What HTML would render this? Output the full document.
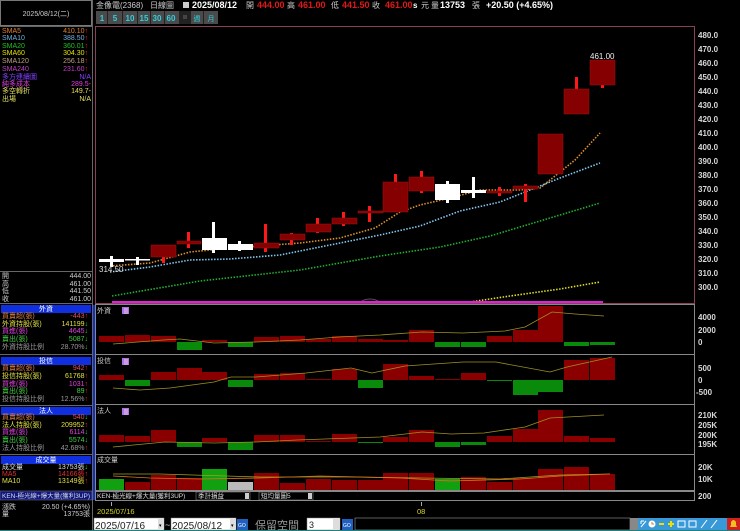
<!DOCTYPE html>
<html><head><meta charset="utf-8"><style>
html,body{margin:0;padding:0;background:#000;width:740px;height:531px;overflow:hidden}
svg{display:block}
text{font-family:"Liberation Sans","Noto Sans CJK TC",sans-serif}
.s{font-size:7px}
.ax{font-size:8px;fill:#d8d8d8;font-weight:bold}
</style></head><body>
<svg width="740" height="531" viewBox="0 0 740 531" xmlns="http://www.w3.org/2000/svg">
<rect width="740" height="531" fill="#000"/>
<!-- LEFT PANEL -->
<rect x="0.5" y="0.5" width="91" height="25" fill="#000" stroke="#777"/>
<text x="46" y="16" class="s" fill="#ccc" text-anchor="middle">2025/08/12(二)</text>
<line x1="0" y1="26.5" x2="92" y2="26.5" stroke="#666"/>
<line x1="92.5" y1="0" x2="92.5" y2="531" stroke="#666"/>
<g class="s" text-anchor="start">
<text x="2" y="33" fill="#e08030">SMA5</text><text x="2" y="40" fill="#70b0e0">SMA10</text><text x="2" y="48" fill="#20c020">SMA20</text><text x="2" y="55" fill="#e0e000">SMA60</text><text x="2" y="63" fill="#c0a080">SMA120</text><text x="2" y="71" fill="#c040c0">SMA240</text><text x="2" y="79" fill="#8040ff">多方連續圖</text><text x="2" y="86" fill="#e040e0">純多成本</text><text x="2" y="93" fill="#e0e060">多空轉折</text><text x="2" y="101" fill="#e0e060">出場</text>
</g>
<g class="s" text-anchor="end">
<text x="88" y="33" fill="#e08030">410.10<tspan fill="#f22">↑</tspan></text><text x="88" y="40" fill="#70b0e0">388.50<tspan fill="#f22">↑</tspan></text><text x="88" y="48" fill="#20c020">360.01<tspan fill="#f22">↑</tspan></text><text x="88" y="55" fill="#e0e000">304.30<tspan fill="#f22">↑</tspan></text><text x="88" y="63" fill="#c0a080">256.18<tspan fill="#f22">↑</tspan></text><text x="88" y="71" fill="#c040c0">231.60<tspan fill="#f22">↑</tspan></text><text x="91" y="79" fill="#8040ff">N/A</text><text x="91" y="86" fill="#e040e0">289.5-</text><text x="91" y="93" fill="#e0e060">149.7-</text><text x="91" y="101" fill="#e0e060">N/A</text>
</g>
<line x1="0" y1="271.5" x2="92" y2="271.5" stroke="#666"/>
<g class="s" fill="#ccc"><text x="2" y="278">開</text><text x="2" y="286">高</text><text x="2" y="293">低</text><text x="2" y="301">收</text></g>
<g class="s" fill="#ccc" text-anchor="end"><text x="91" y="278">444.00</text><text x="91" y="286">461.00</text><text x="91" y="293">441.50</text><text x="91" y="301">461.00</text></g>
<line x1="0" y1="303.5" x2="92" y2="303.5" stroke="#666"/>
<!-- 外資 -->
<rect x="1" y="305" width="90" height="8" fill="#1030e0"/><text x="46" y="311" class="s" fill="#fff" text-anchor="middle">外資</text>
<g class="s"><text x="2" y="318" fill="#e08040">買賣超(張)</text><text x="2" y="326" fill="#e0e040">外資持股(張)</text><text x="2" y="333" fill="#e040e0">買進(張)</text><text x="2" y="341" fill="#40d040">賣出(張)</text><text x="2" y="349" fill="#999">外資持股比例</text></g>
<g class="s" text-anchor="end"><text x="88" y="318" fill="#e05050">-443<tspan fill="#f22">↑</tspan></text><text x="88" y="326" fill="#e0e040">141199<tspan fill="#2d2">↓</tspan></text><text x="88" y="333" fill="#e040e0">4645<tspan fill="#2d2">↓</tspan></text><text x="88" y="341" fill="#40d040">5087<tspan fill="#2d2">↓</tspan></text><text x="88" y="349" fill="#999">28.70%<tspan fill="#2d2">↓</tspan></text></g>
<line x1="0" y1="354.5" x2="92" y2="354.5" stroke="#666"/>
<!-- 投信 -->
<rect x="1" y="357" width="90" height="8" fill="#1030e0"/><text x="46" y="363" class="s" fill="#fff" text-anchor="middle">投信</text>
<g class="s"><text x="2" y="370" fill="#e08040">買賣超(張)</text><text x="2" y="378" fill="#e0e040">投信持股(張)</text><text x="2" y="386" fill="#e040e0">買進(張)</text><text x="2" y="393" fill="#40d040">賣出(張)</text><text x="2" y="401" fill="#999">投信持股比例</text></g>
<g class="s" text-anchor="end"><text x="88" y="370" fill="#e05050">942<tspan fill="#f22">↑</tspan></text><text x="88" y="378" fill="#e0e040">61768<tspan fill="#f22">↑</tspan></text><text x="88" y="386" fill="#e040e0">1031<tspan fill="#f22">↑</tspan></text><text x="88" y="393" fill="#40d040">89<tspan fill="#f22">↑</tspan></text><text x="88" y="401" fill="#999">12.56%<tspan fill="#f22">↑</tspan></text></g>
<line x1="0" y1="405.5" x2="92" y2="405.5" stroke="#666"/>
<!-- 法人 -->
<rect x="1" y="407" width="90" height="8" fill="#1030e0"/><text x="46" y="413" class="s" fill="#fff" text-anchor="middle">法人</text>
<g class="s"><text x="2" y="419" fill="#e08040">買賣超(張)</text><text x="2" y="427" fill="#e0e040">法人持股(張)</text><text x="2" y="434" fill="#e040e0">買進(張)</text><text x="2" y="442" fill="#40d040">賣出(張)</text><text x="2" y="450" fill="#999">法人持股比例</text></g>
<g class="s" text-anchor="end"><text x="88" y="419" fill="#e05050">540<tspan fill="#2d2">↓</tspan></text><text x="88" y="427" fill="#e0e040">209952<tspan fill="#f22">↑</tspan></text><text x="88" y="434" fill="#e040e0">6114<tspan fill="#2d2">↓</tspan></text><text x="88" y="442" fill="#40d040">5574<tspan fill="#2d2">↓</tspan></text><text x="88" y="450" fill="#999">42.68%<tspan fill="#f22">↑</tspan></text></g>
<line x1="0" y1="454.5" x2="92" y2="454.5" stroke="#666"/>
<!-- 成交量 -->
<rect x="1" y="456" width="90" height="8" fill="#1030e0"/><text x="46" y="462" class="s" fill="#fff" text-anchor="middle">成交量</text>
<g class="s"><text x="2" y="469" fill="#ddd">成交量</text><text x="2" y="476" fill="#e03030">MA5</text><text x="2" y="483" fill="#e0e040">MA10</text></g>
<g class="s" text-anchor="end"><text x="88" y="469" fill="#ddd">13753張<tspan fill="#2d2">↓</tspan></text><text x="88" y="476" fill="#e03030">14166張<tspan fill="#f22">↑</tspan></text><text x="88" y="483" fill="#e0e040">13149張<tspan fill="#f22">↑</tspan></text></g>
<rect x="0" y="491" width="92" height="9" fill="#101880" stroke="#777" stroke-width="0.5"/>
<text x="2" y="498" font-size="6" fill="#ddd" textLength="88" lengthAdjust="spacingAndGlyphs">KEN-極光線+爆大量(獲利3UP)</text>
<g class="s" fill="#ccc"><text x="2" y="509">漲跌</text><text x="2" y="516">量</text></g>
<g class="s" fill="#ccc" text-anchor="end"><text x="90" y="509">20.50 (+4.65%)</text><text x="90" y="516">13753張</text></g>
<rect x="93" y="305" width="2" height="195" fill="#1030c0"/>

<!-- HEADER -->
<g font-size="8">
<text x="96" y="8" fill="#ccc">金像電(2368)</text>
<text x="150" y="8" fill="#ccc">日線圖</text>
<rect x="183" y="2" width="6" height="6" fill="#ccc"/>
<text x="192" y="8" fill="#fff" font-weight="bold" font-size="9">2025/08/12</text>
<text x="246" y="8" fill="#ccc">開</text><text x="257" y="8" fill="#e01818" font-weight="bold" font-size="9">444.00</text>
<text x="287" y="8" fill="#ccc">高</text><text x="298" y="8" fill="#e01818" font-weight="bold" font-size="9">461.00</text>
<text x="331" y="8" fill="#ccc">低</text><text x="342" y="8" fill="#e01818" font-weight="bold" font-size="9">441.50</text>
<text x="372" y="8" fill="#ccc">收</text><text x="385" y="8" fill="#e01818" font-weight="bold" font-size="9">461.00</text>
<text x="413" y="8" fill="#fff" font-weight="bold">s</text><text x="421" y="8" fill="#ccc">元</text>
<text x="431" y="8" fill="#ccc">量</text><text x="440" y="8" fill="#fff" font-weight="bold" font-size="9">13753</text><text x="472" y="8" fill="#ccc">張</text>
<text x="486" y="8" fill="#fff" font-weight="bold" font-size="9">+20.50 (+4.65%)</text>
</g>
<g font-size="8" font-weight="bold" fill="#30d0e0" text-anchor="middle">
<rect x="96" y="11" width="122" height="13" fill="#4a4a4a"/>
<rect x="179" y="11" width="12" height="13" fill="#222"/>
<g stroke="#222" stroke-width="1"><line x1="107.5" y1="11" x2="107.5" y2="24"/><line x1="122.5" y1="11" x2="122.5" y2="24"/><line x1="137.5" y1="11" x2="137.5" y2="24"/><line x1="150.5" y1="11" x2="150.5" y2="24"/><line x1="164.5" y1="11" x2="164.5" y2="24"/><line x1="203.5" y1="11" x2="203.5" y2="24"/></g>
<text x="102" y="21">1</text><text x="115" y="21">5</text><text x="130" y="21">10</text><text x="144" y="21">15</text><text x="157" y="21">30</text><text x="171" y="21">60</text>
<rect x="183" y="15" width="4" height="4" fill="#444"/>
<text x="197" y="21" font-weight="normal" font-size="7">週</text><text x="211" y="21" font-weight="normal" font-size="7">月</text>
</g>

<!-- MAIN CHART -->
<rect x="95.5" y="26.5" width="599" height="277" fill="none" stroke="#8a4058"/>
<g class="ax">
<text x="698" y="38">480.0</text><text x="698" y="52">470.0</text><text x="698" y="66">460.0</text><text x="698" y="80">450.0</text><text x="698" y="94">440.0</text><text x="698" y="108">430.0</text><text x="698" y="122">420.0</text><text x="698" y="136">410.0</text><text x="698" y="150">400.0</text><text x="698" y="164">390.0</text><text x="698" y="178">380.0</text><text x="698" y="192">370.0</text><text x="698" y="206">360.0</text><text x="698" y="220">350.0</text><text x="698" y="234">340.0</text><text x="698" y="248">330.0</text><text x="698" y="262">320.0</text><text x="698" y="276">310.0</text><text x="698" y="290">300.0</text>
</g>
<g fill="none" stroke-width="1.6" stroke-dasharray="1.5 1.5">
<polyline stroke="#e09030" points="110,266 150,263 190,252 230,248 260,246 300,243 340,238 375,228 400,212 420,205 450,198 480,190 520,190 540,188 555,176 575,160 600,133"/>
<polyline stroke="#80c8f0" points="110,272 150,267 190,260 230,259 280,255 330,245 380,235 420,226 460,211 500,202 530,190 560,178 600,163"/>
<polyline stroke="#20b030" points="112,296 200,281 300,270 380,256 440,247 490,236 540,221 600,203"/>
<polyline stroke="#e0e020" points="470,302 510,296 560,289 600,282"/>
</g>
<path d="M360,302 Q370,296 380,302" stroke="#555" fill="none"/>
<rect x="112" y="301" width="491" height="2" fill="#e020e0"/>
<g fill="#ff1818">
<rect x="162" y="257" width="3" height="6"/><rect x="187" y="232" width="3" height="16"/><rect x="264" y="224" width="3" height="28"/><rect x="290" y="233" width="3" height="12"/><rect x="316" y="218" width="3" height="15"/><rect x="342" y="212" width="3" height="14"/><rect x="368" y="206" width="3" height="16"/><rect x="394" y="174" width="3" height="8"/><rect x="420" y="171" width="3" height="22"/><rect x="498" y="187" width="3" height="9"/><rect x="524" y="184" width="3" height="18"/><rect x="575" y="77" width="3" height="12"/><rect x="601" y="85" width="3" height="3"/>
</g>
<g fill="#850000" stroke="#a01010" stroke-width="0.5">
<rect x="151" y="245" width="25" height="12"/><rect x="177" y="241" width="24" height="3"/><rect x="254" y="243" width="25" height="5"/><rect x="280" y="234" width="25" height="6"/><rect x="306" y="224" width="25" height="8"/><rect x="332" y="218" width="25" height="6"/><rect x="358" y="211" width="25" height="2"/><rect x="383" y="182" width="25" height="30"/><rect x="409" y="177" width="25" height="14"/><rect x="487" y="191" width="25" height="2"/><rect x="513" y="186" width="25" height="3"/><rect x="538" y="134" width="25" height="40"/><rect x="564" y="89" width="25" height="25"/><rect x="590" y="60" width="25" height="25"/>
</g>
<g fill="#fff">
<rect x="99" y="259" width="25" height="3"/><rect x="110" y="256" width="3" height="11"/>
<rect x="125" y="259" width="25" height="1.5"/><rect x="136" y="257" width="3" height="8"/>
<rect x="202" y="238" width="25" height="12"/><rect x="212" y="222" width="3" height="31"/>
<rect x="228" y="244" width="25" height="6"/><rect x="238" y="241" width="3" height="10"/>
<rect x="435" y="184" width="25" height="16"/><rect x="446" y="181" width="3" height="22"/>
<rect x="461" y="190" width="25" height="3"/><rect x="472" y="177" width="3" height="21"/>
</g>
<text x="590" y="59" font-size="8" fill="#eee">461.00</text>
<text x="99" y="272" font-size="8" fill="#ddd">314.50</text>

<!-- SUB PANEL 1 -->
<rect x="95.5" y="304.5" width="599" height="50" fill="none" stroke="#888"/>
<text x="97" y="313" class="s" fill="#ccc">外資</text>
<rect x="122" y="307" width="7" height="7" fill="#b070e0"/><g stroke="#fff" stroke-width="0.6"><line x1="124" y1="309" x2="128" y2="309"/><line x1="124" y1="311" x2="128" y2="311"/><line x1="124" y1="313" x2="128" y2="313"/></g>
<g class="ax"><text x="698" y="320">4000</text><text x="698" y="333">2000</text><text x="698" y="345">0</text></g>
<g fill="#8a0000">
<rect x="99" y="336" width="25" height="6"/><rect x="125" y="335" width="25" height="7"/><rect x="151" y="336" width="25" height="6"/><rect x="202" y="340" width="25" height="2"/><rect x="254" y="337" width="25" height="5"/><rect x="280" y="336" width="25" height="6"/><rect x="306" y="339" width="25" height="3"/><rect x="332" y="336" width="25" height="6"/><rect x="358" y="339" width="25" height="3"/><rect x="383" y="340" width="25" height="2"/><rect x="409" y="330" width="25" height="12"/><rect x="487" y="336" width="25" height="6"/><rect x="513" y="330" width="25" height="12"/><rect x="538" y="306" width="25" height="36"/>
</g>
<g fill="#0a8a0a">
<rect x="177" y="342" width="25" height="8"/><rect x="228" y="342" width="25" height="5"/><rect x="435" y="342" width="25" height="5"/><rect x="461" y="342" width="25" height="5"/><rect x="564" y="342" width="25" height="4"/><rect x="590" y="342" width="25" height="3"/>
</g>
<polyline fill="none" stroke="#a09020" stroke-width="0.8" points="113,344 163,340 180,339 214,343 256,342 300,340 339,337 380,335 422,332 463,333 505,331 525,327 552,312 575,314 604,316"/>

<!-- SUB PANEL 2 -->
<rect x="95.5" y="354.5" width="599" height="50" fill="none" stroke="#888"/>
<text x="97" y="363" class="s" fill="#ccc">投信</text>
<rect x="122" y="358" width="7" height="7" fill="#b070e0"/><g stroke="#fff" stroke-width="0.6"><line x1="124" y1="360" x2="128" y2="360"/><line x1="124" y1="362" x2="128" y2="362"/><line x1="124" y1="364" x2="128" y2="364"/></g>
<g class="ax"><text x="698" y="371">500</text><text x="698" y="383">0</text><text x="696" y="395">-500</text></g>
<g fill="#8a0000">
<rect x="99" y="375" width="25" height="5"/><rect x="151" y="372" width="25" height="8"/><rect x="177" y="368" width="25" height="12"/><rect x="202" y="372" width="25" height="8"/><rect x="254" y="374" width="25" height="6"/><rect x="280" y="373" width="25" height="7"/><rect x="306" y="379" width="25" height="1"/><rect x="332" y="369" width="25" height="11"/><rect x="383" y="364" width="25" height="16"/><rect x="409" y="376" width="25" height="4"/><rect x="435" y="379" width="25" height="1"/><rect x="461" y="373" width="25" height="7"/><rect x="564" y="360" width="25" height="20"/><rect x="590" y="358" width="25" height="22"/>
</g>
<g fill="#0a8a0a">
<rect x="125" y="380" width="25" height="6"/><rect x="228" y="380" width="25" height="7"/><rect x="358" y="380" width="25" height="8"/><rect x="487" y="380" width="25" height="1"/><rect x="513" y="380" width="25" height="15"/><rect x="538" y="380" width="25" height="12"/>
</g>
<polyline fill="none" stroke="#a09020" stroke-width="0.8" points="113,388 140,390 170,388 214,382 231,377 256,377 306,373 351,368 372,373 405,366 463,362 496,362 550,372 567,367 612,357"/>

<!-- SUB PANEL 3 -->
<rect x="95.5" y="404.5" width="599" height="50" fill="none" stroke="#888"/>
<text x="97" y="413" class="s" fill="#ccc">法人</text>
<rect x="122" y="408" width="7" height="7" fill="#b070e0"/><g stroke="#fff" stroke-width="0.6"><line x1="124" y1="410" x2="128" y2="410"/><line x1="124" y1="412" x2="128" y2="412"/><line x1="124" y1="414" x2="128" y2="414"/></g>
<g class="ax"><text x="698" y="418">210K</text><text x="698" y="428">205K</text><text x="698" y="438">200K</text><text x="698" y="447">195K</text></g>
<g fill="#8a0000">
<rect x="99" y="435" width="25" height="7"/><rect x="125" y="436" width="25" height="6"/><rect x="151" y="430" width="25" height="12"/><rect x="202" y="438" width="25" height="4"/><rect x="254" y="435" width="25" height="7"/><rect x="280" y="435" width="25" height="7"/><rect x="306" y="441" width="25" height="1"/><rect x="332" y="434" width="25" height="8"/><rect x="383" y="437" width="25" height="5"/><rect x="409" y="430" width="25" height="12"/><rect x="487" y="436" width="25" height="6"/><rect x="513" y="429" width="25" height="13"/><rect x="538" y="410" width="25" height="32"/><rect x="564" y="436" width="25" height="6"/><rect x="590" y="438" width="25" height="4"/>
</g>
<g fill="#0a8a0a">
<rect x="177" y="442" width="25" height="5"/><rect x="228" y="442" width="25" height="8"/><rect x="358" y="442" width="25" height="1"/><rect x="435" y="442" width="25" height="5"/><rect x="461" y="442" width="25" height="3"/>
</g>
<polyline fill="none" stroke="#a09020" stroke-width="0.8" points="113,447 165,442 214,443 256,442 297,440 380,437 422,432 451,434 484,433 525,427 550,418 604,415"/>

<!-- VOLUME -->
<rect x="95.5" y="454.5" width="599" height="36" fill="none" stroke="#888"/>
<text x="97" y="462" class="s" fill="#ccc">成交量</text>
<g class="ax"><text x="698" y="470">20K</text><text x="698" y="482">10K</text><text x="698" y="499">200</text></g>
<g fill="#8a0000">
<rect x="125" y="482" width="25" height="8"/><rect x="151" y="475" width="25" height="15"/><rect x="177" y="478" width="25" height="12"/><rect x="254" y="473" width="25" height="17"/><rect x="280" y="483" width="25" height="7"/><rect x="306" y="479" width="25" height="11"/><rect x="332" y="480" width="25" height="10"/><rect x="358" y="480" width="25" height="10"/><rect x="383" y="473" width="25" height="17"/><rect x="409" y="473" width="25" height="17"/><rect x="461" y="477" width="25" height="13"/><rect x="487" y="482" width="25" height="8"/><rect x="513" y="478" width="25" height="12"/><rect x="538" y="469" width="25" height="21"/><rect x="564" y="467" width="25" height="23"/><rect x="590" y="474" width="25" height="16"/>
</g>
<g fill="#10a010"><rect x="99" y="479" width="25" height="11"/><rect x="202" y="469" width="25" height="21"/><rect x="435" y="479" width="25" height="11"/></g>
<rect x="228" y="482" width="25" height="8" fill="#bbb"/>
<polyline fill="none" stroke="#a0a020" stroke-width="0.8" points="113,474 160,474 260,477 350,477 420,478 500,479 560,475 610,474"/>
<polyline fill="none" stroke="#e07020" stroke-width="0.8" points="113,476 150,478 200,479 260,478 320,476 400,478 450,481 520,479 560,476 610,474"/>

<!-- KEN row -->
<rect x="95.5" y="491.5" width="599" height="9" fill="#000" stroke="#888"/>
<text x="97" y="498" font-size="6.5" fill="#ddd">KEN-極光線+爆大量(獲利3UP)</text>
<rect x="196" y="492" width="54" height="8" fill="#000" stroke="#999" stroke-width="0.5"/><text x="198" y="498" font-size="6.5" fill="#ddd">季計損益</text><rect x="245" y="493" width="4" height="6" fill="#ccc"/>
<rect x="259" y="492" width="54" height="8" fill="#000" stroke="#999" stroke-width="0.5"/><text x="261" y="498" font-size="6.5" fill="#ddd">短均量圖5</text><rect x="308" y="493" width="4" height="6" fill="#ccc"/>
<line x1="111.5" y1="502" x2="111.5" y2="506" stroke="#aaa"/><line x1="421.5" y1="502" x2="421.5" y2="506" stroke="#aaa"/>
<text x="97" y="514" font-size="7.5" fill="#d8d820">2025/07/16</text>
<text x="417" y="514" font-size="7.5" fill="#d8d820">08</text>

<!-- BOTTOM TOOLBAR -->
<rect x="93" y="517" width="647" height="14" fill="#000"/>
<rect x="94" y="518" width="70" height="12" fill="#fff" stroke="#888" stroke-width="0.5"/>
<text x="95" y="529" font-size="10" fill="#222">2025/07/16</text>
<rect x="158" y="519" width="6" height="10" fill="#ddd"/><text x="159" y="527" font-size="5" fill="#000">▾</text>
<text x="165" y="528" font-size="9" fill="#ccc">~</text>
<rect x="171" y="518" width="65" height="12" fill="#fff" stroke="#888" stroke-width="0.5"/>
<text x="172" y="529" font-size="10" fill="#222">2025/08/12</text>
<rect x="230" y="519" width="6" height="10" fill="#ddd"/><text x="231" y="527" font-size="5" fill="#000">▾</text>
<rect x="237" y="519" width="11" height="11" fill="#2060c0"/><text x="238" y="527" font-size="5" fill="#fff">GO</text>
<text x="255" y="529" font-size="11" fill="#999">保留空間</text>
<rect x="307" y="518" width="33" height="12" fill="#fff" stroke="#888" stroke-width="0.5"/>
<text x="309" y="528" font-size="9" fill="#222">3</text>
<rect x="333" y="519" width="7" height="10" fill="#ddd"/>
<rect x="342" y="519" width="11" height="11" fill="#2060c0"/><text x="343" y="527" font-size="5" fill="#fff">GO</text>
<rect x="355" y="518" width="275" height="12" fill="#000" stroke="#999" stroke-width="0.6"/>
<rect x="630" y="518" width="8" height="12" fill="#888"/>
<rect x="638" y="518" width="89" height="12" fill="#3898d8"/>
<g stroke="#fff" stroke-width="1" fill="none">
<path d="M641,527 L646,521 M641,521 L644,521 M641,521 L641,524"/>
<circle cx="652" cy="524" r="3.5" fill="#fff" stroke="none"/><path d="M652,522 L652,524 L654,524" stroke="#e08020"/>
<path d="M659,524 L664,524" stroke="#f0e000" stroke-width="2"/>
<path d="M668,524 L674,524 M671,521 L671,527" stroke="#f0e000" stroke-width="2"/>
<rect x="678" y="521" width="7" height="6"/><rect x="689" y="521" width="7" height="6"/>
<path d="M701,528 L707,520"/>
<path d="M711,528 L717,520"/>
</g>
<rect x="727" y="518" width="13" height="12" fill="#d02020"/>
<path d="M730,527 L737,527 L736,525 L736,522 Q733.5,518 731,522 L731,525 Z" fill="#f0c020"/>
<rect x="0" y="530" width="740" height="1" fill="#208080"/>
</svg>
</body></html>
